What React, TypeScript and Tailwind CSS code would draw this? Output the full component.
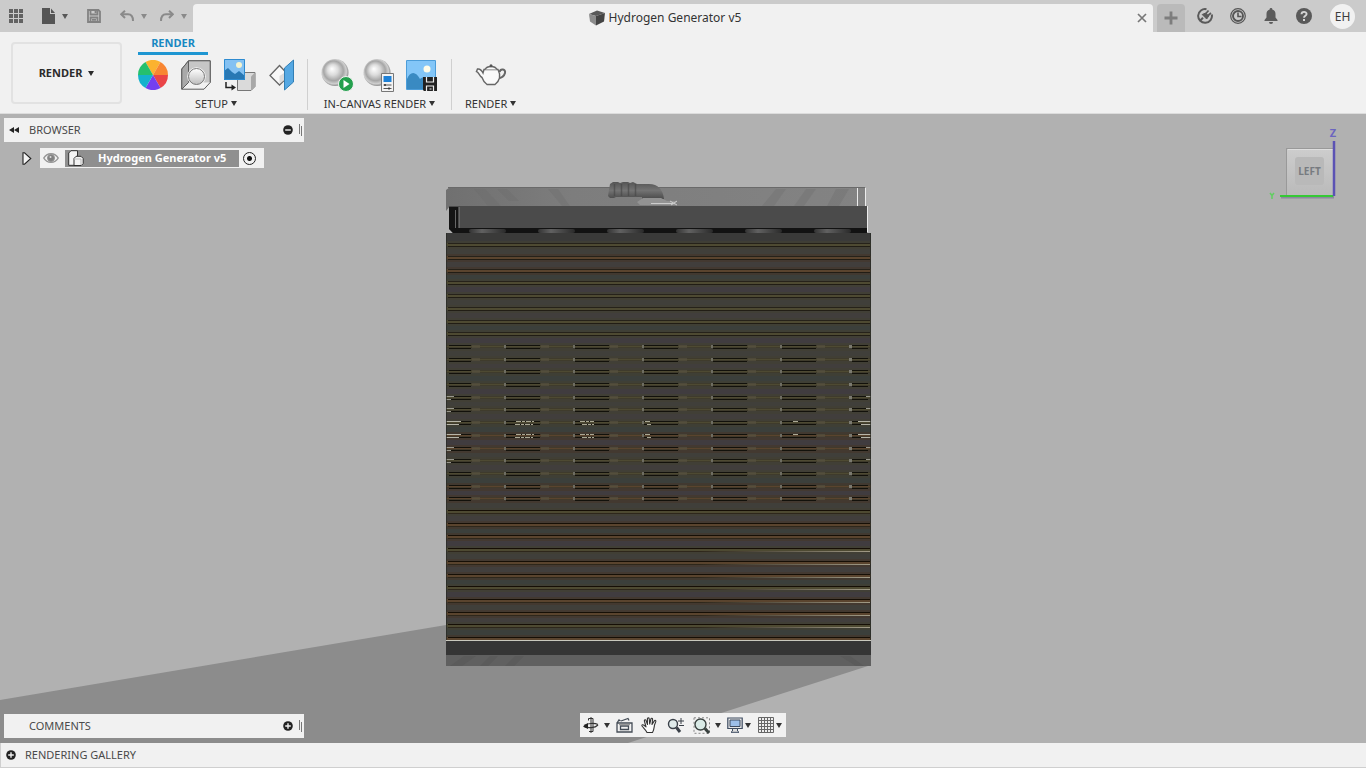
import type { ReactNode } from "react";
import { clsx } from "clsx";

const FONT = "font-['Noto_Sans','Open_Sans',sans-serif]";

function Caret({ className }: { className?: string }) {
  return (
    <svg viewBox="0 0 6 5" className={clsx("w-[6px] h-[5px] shrink-0", className)} aria-hidden="true">
      <path d="M0 0h6L3 5z" fill="currentColor" />
    </svg>
  );
}

function IconButton({
  label,
  className,
  children,
}: {
  label: string;
  className?: string;
  children: ReactNode;
}) {
  return (
    <button type="button" title={label} aria-label={label} className={clsx("flex items-center shrink-0", className)}>
      {children}
    </button>
  );
}

/* Title bar */

function TitleBar() {
  return (
    <header className="flex h-8 bg-[#cbcbcb] text-[#585858]">
      <div className="flex w-[193px] shrink-0 items-center pl-[9px]">
        <IconButton label="Data panel" className="mr-[19px]">
          <svg viewBox="0 0 14 14" className="h-[14px] w-[14px]" fill="#626262">
            {[0, 5, 10].map((y) => [0, 5, 10].map((x) => <rect key={`${x}-${y}`} x={x} y={y} width="4" height="4" />))}
          </svg>
        </IconButton>
        <IconButton label="File" className="mr-[19px] gap-[7px]">
          <svg viewBox="0 0 13 16" className="h-4 w-[13px]" fill="#555">
            <path d="M0 0h8v6h5v10H0z" />
            <path d="M9 0.5 13 5H9z" />
          </svg>
          <Caret />
        </IconButton>
        <IconButton label="Save" className="mr-[19px]">
          <svg viewBox="0 0 14 14" className="h-[14px] w-[14px]" fill="none" stroke="#828282" strokeWidth="1.800">
            <path d="M1 1h10.500L13 2.500V13H1z" />
            <path d="M3.500 1v4.500h7V1M3.500 13V8.500h7V13M5 10.800h4M8.500 1v3" />
          </svg>
        </IconButton>
        <IconButton label="Undo" className="mr-[13px] gap-[7px] text-[#8a8a8a]">
          <svg viewBox="0 0 14 12" className="h-3 w-[14px]" fill="none" stroke="currentColor" strokeWidth="2">
            <path d="M5 .8 1.2 4.3 5 8" />
            <path d="M1.500 4.300H8c3.400 0 5 2.200 5 6.700" />
          </svg>
          <Caret />
        </IconButton>
        <IconButton label="Redo" className="gap-[7px] text-[#8a8a8a]">
          <svg viewBox="0 0 14 12" className="h-3 w-[14px]" fill="none" stroke="currentColor" strokeWidth="2">
            <path d="M9 .8l3.800 3.500L9 8" />
            <path d="M12.500 4.300H6c-3.400 0-5 2.200-5 6.700" />
          </svg>
          <Caret />
        </IconButton>
      </div>

      <div className="mt-1 flex min-w-0 flex-1 items-center rounded-t-[4px] bg-[#f1f1f1] pr-[6px]">
        <div className="flex flex-1 items-center justify-center gap-1 text-[12px] leading-4 text-[#333]">
          <svg viewBox="0 0 16 16" className="h-4 w-4" aria-hidden="true">
            <path d="M0 4 8 .5 16 3 7 6z" fill="#595959" />
            <path d="M0 4l7 2v9.500L1 11.500z" fill="#8c8c8c" />
            <path d="M7 6l9-3-1 8.500-8 4z" fill="#444" />
          </svg>
          <span>Hydrogen Generator v5</span>
        </div>
        <button type="button" aria-label="Close document">
          <svg viewBox="0 0 10 10" className="h-[10px] w-[10px]" stroke="#777" strokeWidth="1.700">
            <path d="M1 1l8 8M9 1 1 9" />
          </svg>
        </button>
      </div>

      <div className="flex shrink-0 items-center pl-1">
        <button type="button" aria-label="New document" className="mt-1 flex h-7 w-7 items-center justify-center rounded-t-[4px] bg-[#bababa]">
          <svg viewBox="0 0 14 14" className="h-[14px] w-[14px]" stroke="#7d7d7d" strokeWidth="2.800">
            <path d="M7 .5v13M.5 7h13" />
          </svg>
        </button>
        <div className="flex items-center gap-[17px] pl-3">
          <IconButton label="Extensions">
            <svg viewBox="0 0 16 16" className="h-4 w-4" fill="none" stroke="#5a5a5a">
              <path d="M9.500 1.200A6.900 6.900 0 1 0 14.800 6.500" strokeWidth="2" />
              <path d="M3 12.800l3-3" strokeWidth="2" />
              <path d="M5.200 6.500l4.500 4.500 2-3-3-3z" fill="#5a5a5a" />
              <path d="M8.500 6l3-3.500M10.500 8l3.500-3" strokeWidth="1.700" />
            </svg>
          </IconButton>
          <IconButton label="Job status">
            <svg viewBox="0 0 16 16" className="h-4 w-4" fill="none" stroke="#555">
              <circle cx="8" cy="8" r="7.300" strokeWidth="1.200" />
              <circle cx="8" cy="8" r="5" strokeWidth="1.900" />
              <path d="M8 4.500V8.500h3.500" strokeWidth="1.600" />
            </svg>
          </IconButton>
          <IconButton label="Notifications">
            <svg viewBox="0 0 16 16" className="h-4 w-4" fill="#5b5b5b">
              <path d="M8 0a1.300 1.300 0 0 1 1.300 1.500C11.700 2 12.500 4 12.500 6v3.500L14.500 12v1h-13v-1l2-2.500V6c0-2 .8-4 3.200-4.500A1.300 1.300 0 0 1 8 0z" />
              <path d="M6 14h4a2 2 0 0 1-4 0z" />
            </svg>
          </IconButton>
          <IconButton label="Help">
            <svg viewBox="0 0 16 16" className="h-4 w-4">
              <circle cx="8" cy="8" r="8" fill="#595959" />
              <path d="M5.500 6.300C5.500 3 10.600 3.200 10.600 6 10.600 7.800 8 7.800 8 9.800" fill="none" stroke="#d4d4d4" strokeWidth="1.900" />
              <rect x="7" y="11" width="2" height="2" fill="#d4d4d4" />
            </svg>
          </IconButton>
        </div>
        <button type="button" aria-label="Account" className="ml-[18px] mr-[11px] h-[25px] w-[25px] rounded-full bg-[#f1f1f1] text-center text-[12px] leading-[25px] text-[#3c3c3c]">
          EH
        </button>
      </div>
    </header>
  );
}

/* Ribbon */

function Ball() {
  return (
    <>
      <defs>
        <radialGradient id="chrome" cx=".48" cy=".48" r=".56" fx=".38" fy=".36">
          <stop offset="0" stopColor="#fff" />
          <stop offset=".35" stopColor="#dcdcdc" />
          <stop offset=".65" stopColor="#a6a6a6" />
          <stop offset=".82" stopColor="#cfcfcf" />
          <stop offset="1" stopColor="#707070" />
        </radialGradient>
      </defs>
      <circle cx="14" cy="13.500" r="13.500" fill="url(#chrome)" />
    </>
  );
}

const WHEEL = [
  ["M15 15 7.500 2A15 15 0 0 1 22.500 2z", "#fbb22f"],
  ["M15 15 22.500 2A15 15 0 0 1 30 15z", "#f88632"],
  ["M15 15H30A15 15 0 0 1 22.500 28z", "#ea4447"],
  ["M15 15 22.500 28A15 15 0 0 1 7.500 28z", "#743ff0"],
  ["M15 15 7.500 28A15 15 0 0 1 0 15z", "#15b2cd"],
  ["M15 15H0A15 15 0 0 1 7.500 2z", "#25c06d"],
];

function GroupLabel({ children }: { children: ReactNode }) {
  return (
    <button type="button" className="flex items-center justify-center gap-[3px] whitespace-nowrap text-[11px] leading-4 text-[#333]">
      {children}
      <Caret className="mb-[2px]" />
    </button>
  );
}

function Ribbon() {
  return (
    <section className="flex h-[82px] border-b border-[#dcdcdc] bg-[#f1f1f1]">
      <button
        type="button"
        className="ml-[11px] mt-[10px] flex h-[62px] w-[111px] shrink-0 items-center justify-center gap-[6px] rounded-[4px] border-2 border-[#e2e2e2] text-[11px] font-bold text-[#2b2b2b]"
      >
        RENDER
        <Caret />
      </button>
      <div className="ml-4 flex flex-col items-start">
        <button type="button" className="h-[23px] w-[70px] border-b-[3px] border-[#1e96d2] text-[11px] font-bold leading-[21px] text-[#1788c2]">
          RENDER
        </button>
        <div className="flex gap-[13px] pt-[4px]">
          <div className="flex flex-col gap-[5px]">
            <div className="flex h-8 items-center gap-[13px]">
              <IconButton label="Appearance">
                <svg viewBox="0 0 30 30" className="h-[30px] w-[30px]">
                  {WHEEL.map(([d, fill]) => (
                    <path key={fill} d={d} fill={fill} />
                  ))}
                </svg>
              </IconButton>
              <IconButton label="Scene settings">
                <svg viewBox="0 0 30 30" className="h-[30px] w-[30px]" stroke="#5c5c5c" strokeLinejoin="round">
                  <path d="M.8 9 7.500.8h21.700v21.700L23 29.200H.8z" fill="#f1f1f1" />
                  <path d="M7.500.8h21.700v21.700H7.500z" fill="#c6c6c6" stroke="none" />
                  <path d="M.8 9 7.500.8v21.700L.8 29.200z" fill="#a9a9a9" />
                  <path d="M7.500.8h21.700v21.700" fill="none" />
                  <circle cx="15.500" cy="16.500" r="9.300" fill="#f5f5f5" stroke="none" />
                  <circle cx="15.500" cy="16.500" r="8" fill="url(#chromeLight)" stroke="#777" />
                  <defs>
                    <linearGradient id="chromeLight" x2="0" y2="1">
                      <stop offset="0" stopColor="#fff" />
                      <stop offset="1" stopColor="#bdbdbd" />
                    </linearGradient>
                  </defs>
                </svg>
              </IconButton>
              <IconButton label="Decal">
                <svg viewBox="0 0 32 32" className="h-8 w-8">
                  <path d="M13.500 17.500l4-4h13.500v14l-4 4H13.500z" fill="#dadada" stroke="#777" />
                  <path d="M27 17.500l4-4v14l-4 4z" fill="#a8a8a8" />
                  <path d="M0 0h21v21H0z" fill="#84c1f2" />
                  <path d="M0 12l4-3 4 4 3 2 4-3 6 5v4H0z" fill="#2878b4" />
                  <path d="M.5.500h20v20H.500z" fill="none" stroke="#2e8bd0" />
                  <circle cx="15" cy="6" r="3" fill="#f5f3cf" />
                  <path d="M2 23v5.500h6" fill="none" stroke="#222" strokeWidth="1.500" />
                  <path d="M7.500 25.500 12 28.500 7.500 31.500z" fill="#222" />
                </svg>
              </IconButton>
              <IconButton label="Texture map controls">
                <svg viewBox="0 0 25 32" className="h-8 w-[25px]">
                  <path d="M1 16.500 10.500 6.500 20 16.500 10.500 26z" fill="#f8f8f8" stroke="#666" strokeWidth="1.300" />
                  <path d="M10.500 25V17l6-4v7z" fill="#dcdcdc" />
                  <path d="M15.500 9 24.500 1v22l-9 8z" fill="#55a8e3" stroke="#327fb5" />
                </svg>
              </IconButton>
            </div>
            <GroupLabel>SETUP</GroupLabel>
          </div>
          <div className="h-[51px] w-px bg-[#d0d0d0]" />
          <div className="flex flex-col gap-[5px]">
            <div className="flex h-8 items-center gap-[9px]">
              <IconButton label="In-canvas render">
                <svg viewBox="0 0 33 33" className="h-[33px] w-[33px]">
                  <Ball />
                  <circle cx="25" cy="25" r="7.500" fill="#24a04e" stroke="#f1f1f1" />
                  <path d="M22.500 21l6 4-6 4z" fill="#fff" />
                </svg>
              </IconButton>
              <IconButton label="In-canvas render settings">
                <svg viewBox="0 0 33 33" className="h-[33px] w-[33px]">
                  <Ball />
                  <path d="M18.500 14.500h12v18h-12z" fill="#f3f3f3" stroke="#777" />
                  <path d="M20.500 17h8v6h-8z" fill="#1d80d6" />
                  <path d="M20.500 26h8M20.500 29.500h8" stroke="#555" />
                  <path d="M22 25v2M26 28.500v2" stroke="#333" strokeWidth="1.500" />
                </svg>
              </IconButton>
              <IconButton label="Capture image">
                <svg viewBox="0 0 33 33" className="h-[33px] w-[33px]">
                  <path d="M2 2h28v29H2z" fill="#83c6f8" />
                  <path d="M2 20c3-8 9-8 13 0 3-3 7-2 15 1v10H2z" fill="#398ac2" />
                  <path d="M1.500 1.500h29v29h-29z" fill="none" stroke="#4c9dd9" />
                  <circle cx="22" cy="10" r="3.500" fill="#fffdea" />
                  <path d="M18 18h14v14H19l-1-1z" fill="#222" />
                  <path d="M21.500 18v5h7v-5M21.500 32v-5h7v5M24.500 30h2" fill="none" stroke="#eee" strokeWidth="1.200" />
                </svg>
              </IconButton>
            </div>
            <GroupLabel>IN-CANVAS RENDER</GroupLabel>
          </div>
          <div className="h-[51px] w-px bg-[#d0d0d0]" />
          <div className="flex flex-col gap-[5px]">
            <div className="flex h-8 items-center justify-center">
              <IconButton label="Render">
                <svg viewBox="0 0 32 22" className="h-[22px] w-8" fill="#fafafa" stroke="#666" strokeWidth="1.400">
                  <path d="M24.500 8c1-4 6.500-3 5.500 1s-4 5-7.500 5.500" fill="none" strokeWidth="2" />
                  <path d="M9 5.500h14c3 6 2 11-3 15h-8c-3-2-4-4-5-7C4 12 4 8 1.500 7.500L2.500 5c3-.5 4 1 5.500 4z" />
                  <path d="M10 5.500c1-2 3-3 6-3s5 1 6 3" />
                  <circle cx="16" cy="1.700" r="1.500" fill="#555" stroke="none" />
                </svg>
              </IconButton>
            </div>
            <GroupLabel>RENDER</GroupLabel>
          </div>
        </div>
      </div>
    </section>
  );
}

/* 3D scene */

const PLATES = Array.from({ length: 32 }, (_, i) => Math.round(243.3 + i * 12.7));
const STUDS = [471, 540, 609, 678, 747, 816];
const FACES = ["#403f3a", "#413e3c", "#3b3f3b", "#403c3f"];

function Plate({ y, index }: { y: number; index: number }) {
  const brown = [1, 2, 15, 16].includes(index) || (index > 18 && index % 3 !== 0);
  const inner = index >= 8 && index <= 20;
  const low = index > 20;
  const core = index === 14 || index === 15;
  return (
    <g>
      <rect x="446" y={y + 3} width="425" height="10" fill={FACES[index % 4]} />
      <rect x="446" y={y - 2} width="425" height="8" fill={brown ? "#45382c" : "#424033"} opacity=".7" />
      <rect x="446" y={y} width="425" height="3" fill={brown ? "#5a442e" : "#4e4a32"} />
      {inner ? (
        <>
          <path d={`M446 ${y}.5H870M446 ${y + 2}.5H870`} stroke="#39362a" opacity=".7" />
          <path
            d={`M449 ${y}.5h22M506 ${y}.5h34M575 ${y}.5h34M644 ${y}.5h34M713 ${y}.5h34M782 ${y}.5h34M852 ${y}.5h16M449 ${y + 3}.5h22M506 ${y + 3}.5h34M575 ${y + 3}.5h34M644 ${y + 3}.5h34M713 ${y + 3}.5h34M782 ${y + 3}.5h34M852 ${y + 3}.5h16`}
            stroke="#12110b"
          />
          {STUDS.map((x) => (
            <g key={x}>
              <rect x={x + 1} y={y} width="8" height="3" fill="#585442" opacity=".6" />
              <rect x={x + 33} y={y} width="2" height="3" fill="#6e6d62" />
            </g>
          ))}
          <rect x="849" y={y} width="3" height="3" fill="#7b7a70" />
        </>
      ) : (
        <>
          <path d={`M448 ${y}.5H870`} stroke={low ? "#160f06" : "#26221a"} />
          <path d={`M448 ${y + 3}.5H870`} stroke={low ? "#2e271b" : "#211d15"} />
        </>
      )}
      {index >= 12 && index <= 17 && <path d={`M446 ${y}.5h8M446 ${y + 3}.5h5M866 ${y}.5h5`} stroke="#98978d" />}
      {core && (
        <>
          <path d={`M446 ${y}.5h15M446 ${y + 3}.5h13M858 ${y}.5h13M861 ${y + 3}.5h10`} stroke="#b6b5a8" />
          <path
            d={`M516 ${y}.5h18M515 ${y + 3}.5h18M580 ${y}.5h14M582 ${y + 3}.5h12M645 ${y}.5h6M647 ${y + 3}.5h4M793 ${y}.5h6`}
            stroke="#aaa894"
            strokeDasharray="5 1 3 1"
          />
        </>
      )}
      {index > 23 && <path d={`M700 ${y + 3}.5H870`} stroke="url(#edge)" />}
    </g>
  );
}

function Scene() {
  return (
    <svg viewBox="0 114 1366 629" preserveAspectRatio="xMidYMid slice" className="absolute inset-0 h-full w-full" role="img" aria-label="Hydrogen Generator model">
      <defs>
        <linearGradient id="edge" gradientUnits="userSpaceOnUse" x1="700" y1="0" x2="870" y2="0">
          <stop offset="0" stopColor="#938d7a" stopOpacity="0" />
          <stop offset="1" stopColor="#a09a86" />
        </linearGradient>
        <linearGradient id="stud">
          <stop offset="0" stopColor="#333" />
          <stop offset=".35" stopColor="#616161" />
          <stop offset="1" stopColor="#2a2a2a" />
        </linearGradient>
        <linearGradient id="cap">
          <stop offset="0" stopColor="#707070" />
          <stop offset=".3" stopColor="#7d7d7d" />
          <stop offset="1" stopColor="#838383" />
        </linearGradient>
        <linearGradient id="hose" x2="0" y2="1">
          <stop offset="0" stopColor="#555" />
          <stop offset=".5" stopColor="#737373" />
          <stop offset="1" stopColor="#4a4a4a" />
        </linearGradient>
      </defs>
      <path d="M0 114H1366V743H0z" fill="#b1b1b1" />
      <path d="M0 700 446 625 868 666 628 743H0z" fill="#8c8c8c" />

      {/* transparent top cover */}
      <path d="M446 211V190l4-3h415v19H450z" fill="url(#cap)" />
      <path d="M448 187.500H865" stroke="#6a6a6a" />
      <path
        d="M474 189l14 17h13l-16-17zM497 189l12 12h10l-12-12zM548 189l14 17h8l-12-17zM776 189l-14 17h12l12-17zM806 189l-12 17h10l12-17zM836 189l-9 17h12l10-17z"
        fill="#6b6b6b"
        opacity=".3"
      />
      <path d="M857.500 188v18M865.500 188v18M867.500 206v26" stroke="#ececec" />

      {/* elbow fitting */}
      <path d="M610 184l3-2h5l2 1 3-1h5l2 1 3-1 4 2h12c9 0 14 6 15 15h-22v-2h-26l-2 1h-4l-2-2z" fill="url(#hose)" />
      <path d="M614.500 184v12M621.500 184v12M628.500 184v12M635.500 184v12" stroke="#444" strokeWidth="1.500" opacity=".6" />
      <path d="M637 202l6-4h18l6 3h10l-2 4h-35z" fill="#939393" />
      <path d="M651 203.500h22M670 201l7 4M677 201l-6 4" stroke="#cdcdcd" />

      {/* lid */}
      <path d="M449 206h418v27H455l-6-4z" fill="#4b4b4b" />
      <path d="M449 207h9v26h-5l-4-4z" fill="#151515" />
      <path d="M455.500 210v18M459.500 207v21" stroke="#676767" />
      <path d="M449 228h418v5H453z" fill="#121212" />
      {STUDS.map((x) => (
        <rect key={x} x={x - 2} y="229" width="37" height="4" rx="2" fill="url(#stud)" />
      ))}

      {/* plate stack */}
      <rect x="446" y="233" width="425" height="408" fill="#3a3a39" />
      {PLATES.map((y, i) => (
        <Plate key={y} y={y} index={i} />
      ))}
      <path d="M446.500 233V641M870.500 233V641" stroke="#272924" opacity=".7" />
      <rect x="446" y="640" width="425" height="15" fill="#353535" />
      <path d="M446 640.500H871" stroke="#c9c8bd" />
      <rect x="446" y="655" width="425" height="11" fill="#606060" />
      <path d="M450 666l14-10h12l-14 10zM480 666l10-10h8l-10 10zM505 666l10-10h9l-10 10zM840 656l16 10h8l-14-10z" fill="#555" opacity=".5" />
    </svg>
  );
}

function ViewCube() {
  return (
    <svg viewBox="0 -4 80 82" className="h-[82px] w-20 font-['Noto_Sans',sans-serif]" role="img" aria-label="View cube: left">
      <defs>
        <linearGradient id="cube" x2="0" y2="1">
          <stop offset="0" stopColor="#cdcdcd" />
          <stop offset="1" stopColor="#bababa" />
        </linearGradient>
      </defs>
      <rect x="20.500" y="22.500" width="48" height="47" fill="url(#cube)" stroke="#999" />
      <path d="M22 23.500h45" stroke="#dedede" />
      <rect x="29" y="31" width="29" height="28" rx="3" fill="#b9b9b9" />
      <text x="43.500" y="49" textAnchor="middle" fontSize="10" fontWeight="bold" fill="#777b80">
        LEFT
      </text>
      <path d="M15 71h53" stroke="#8a8a9c" strokeWidth="3" />
      <path d="M14 70h53" stroke="#35c935" strokeWidth="2" />
      <path d="M68 15v55" stroke="#5b52b4" strokeWidth="2.500" />
      <text x="67" y="11" textAnchor="middle" fontSize="11" fontWeight="bold" fill="#6b64c0">
        Z
      </text>
      <path d="M4 67l2 2.500L8 67M6 69v4" stroke="#60cf60" strokeWidth="1.500" fill="none" />
    </svg>
  );
}

function RoundToggle({ label, plus }: { label: string; plus?: boolean }) {
  return (
    <IconButton label={label}>
      <svg viewBox="0 0 10 10" className="h-[10px] w-[10px]">
        <circle cx="5" cy="5" r="4.800" fill="#222" />
        <path d={plus ? "M2.200 5h5.600M5 2.200v5.600" : "M2.200 5h5.600"} stroke="#f1f1f1" strokeWidth="1.400" />
      </svg>
    </IconButton>
  );
}

function Grip() {
  return (
    <svg viewBox="0 0 3 12" className="ml-[6px] h-3 w-[3px]" aria-hidden="true">
      <path d="M.5 0v10M2.500 2v10" stroke="#777" />
    </svg>
  );
}

function BrowserPanel() {
  return (
    <aside className="ml-1 mt-1 w-[300px]">
      <div className="flex h-6 items-center bg-[#f1f1f1] pl-[5px] pr-[2px]">
        <IconButton label="Collapse browser">
          <svg viewBox="0 0 10 6" className="h-[6px] w-[10px]" fill="#222">
            <path d="M5 0v6L0 3zM10 0v6L5 3z" />
          </svg>
        </IconButton>
        <h2 className="ml-[10px] flex-1 text-[11px] leading-4 text-[#4a4a4a]">BROWSER</h2>
        <RoundToggle label="Collapse all" />
        <Grip />
      </div>
      <div className="mt-[6px] flex h-5 items-center pl-[18px]">
        <IconButton label="Expand Hydrogen Generator v5" className="mr-[8px]">
          <svg viewBox="0 0 10 13" className="h-[13px] w-[10px]">
            <path d="M1 .8V12.200L2.500 12.200 8.800 6.500 2.500.8z" fill="#f3f3f3" stroke="#222" strokeWidth="1.100" />
          </svg>
        </IconButton>
        <div className="flex h-5 items-center bg-[#f1f1f1]">
          <IconButton label="Toggle visibility" className="ml-[3px] mr-[5px]">
            <svg viewBox="0 0 16 12" className="h-3 w-4" fill="none" stroke="#959595">
              <path d="M.8 6C4 .2 12 .2 15.200 6 12 11.800 4 11.800.8 6z" strokeWidth="1.500" />
              <circle cx="8" cy="6" r="3.500" fill="#808080" />
              <circle cx="7.500" cy="5" r="1" fill="#ddd" stroke="none" />
            </svg>
          </IconButton>
          <div className="ml-px flex h-[17px] w-[174px] items-center bg-[#8f8f8f] pl-[3px] text-[11px] font-bold leading-4 text-white">
            <svg viewBox="0 0 16 16" className="mr-[14px] h-4 w-4 shrink-0" fill="#f4f4f4" stroke="#333" aria-hidden="true">
              <path d="M.7 3 3 .7h6.500V13l-2 2.300H.7z" />
              <path d="M6 8.500l2-2.200h5l2.200 2.200v5l-2 2H6z" />
              <path d="M6 9h7v6" fill="none" stroke="#bbb" />
            </svg>
            <span className="whitespace-nowrap">Hydrogen Generator v5</span>
          </div>
          <label className="ml-[2px] mr-[6px] flex h-[14px] w-[17px] items-center justify-center">
            <input
              type="radio"
              name="active-component"
              aria-label="Activate component"
              defaultChecked
              className="h-[13px] w-[13px] appearance-none rounded-full border border-[#222] bg-[radial-gradient(circle,#111_2px,transparent_3px)]"
            />
          </label>
        </div>
      </div>
    </aside>
  );
}

function NavToolbar() {
  return (
    <nav className="mb-px flex h-6 w-[206px] items-center bg-[#f1f1f1] pl-[3px] text-[#333]">
      <IconButton label="Orbit" className="mr-[6px] gap-[5px]">
        <svg viewBox="0 0 16 16" className="h-4 w-4" fill="none" stroke="#333" strokeWidth="1.200">
          <path d="M8 0v16M5.500 3.500V1.500h4.500v13H6" strokeWidth="1" />
          <path d="M15 7.500C12 6 4 6 1 8.500M1 9.500c4 2 11 1.500 14-1.500" />
          <path d="M5 6v6L0 9.500z" fill="#222" stroke="none" />
        </svg>
        <Caret />
      </IconButton>
      <IconButton label="Look at" className="mr-[8px]">
        <svg viewBox="0 0 17 16" className="h-4 w-[17px]" fill="none" stroke="#444c56" strokeWidth="1.300">
          <path d="M1 6h15v9H1zM1 6l2-3 1.500 1M5 4l7-2.500 1 2M12 1.500" />
          <path d="M4.500 9h8v3.500h-8z" />
          <path d="M3 7.500h11" stroke="#999" />
        </svg>
      </IconButton>
      <IconButton label="Pan" className="mr-[9px]">
        <svg viewBox="0 0 17 17" className="h-[17px] w-[17px]" fill="#fbfbfb" stroke="#333" strokeWidth="1.100" strokeLinejoin="round">
          <path d="M6 15.500C5 13 2.500 11 1 9c-.5-1.200 1-1.700 2-.7l2 1.500L3.400 4c-.3-1.400 1.300-1.700 1.700-.4L6.500 7.500 6.400 1.800c0-1.300 1.700-1.300 1.800 0L8.700 7l1.200-5c.3-1.200 1.800-.9 1.700.3L11 7.500l2.300-3.600c.7-1 1.900-.3 1.500.7L13.500 8c-.5 3.500-.5 5-2 7.500z" />
        </svg>
      </IconButton>
      <IconButton label="Zoom" className="mr-[8px]">
        <svg viewBox="0 0 18 17" className="h-[17px] w-[18px]" fill="none" stroke="#3a4048" strokeWidth="1.400">
          <circle cx="6" cy="7" r="4.500" fill="#dfeaea" />
          <path d="M9.500 10.500 13 15" strokeWidth="3" />
          <path d="M14 1v6M11 4h6M12 8.500h5" strokeWidth="1" />
        </svg>
      </IconButton>
      <IconButton label="Fit" className="mr-[6px] gap-[4px]">
        <svg viewBox="0 0 18 17" className="h-[17px] w-[18px]" fill="none" stroke="#39413f" strokeWidth="1.400">
          <path d="M1 .8h15.500v15.500H1z" stroke="#888" strokeWidth="1" strokeDasharray="2 2" />
          <circle cx="7.500" cy="7.500" r="5.500" fill="#d9eae6" />
          <path d="M12 11.500 16 16" strokeWidth="3" />
        </svg>
        <Caret />
      </IconButton>
      <IconButton label="Display settings" className="mr-[7px] gap-[2px]">
        <svg viewBox="0 0 16 16" className="h-4 w-4" stroke="#3e4c61" fill="none">
          <path d="M.8 1h14.400v10.500H.8z" fill="#e6e6e6" strokeWidth="1.200" />
          <path d="M3 3h10v6.500H3z" fill="#9dbfe9" />
          <path d="M5.500 11.500h5V14l1.500 1.300H4L5.500 14z" fill="#ddd" />
        </svg>
        <Caret />
      </IconButton>
      <IconButton label="Grid and snaps" className="gap-[2px]">
        <svg viewBox="0 0 16 16" className="h-4 w-4" fill="#eee" stroke="#666">
          <path d="M.5.500h15v15H.500z" />
          <path d="M3.500 0v16M6.500 0v16M9.500 0v16M12.500 0v16M0 3.500h16M0 6.500h16M0 9.500h16M0 12.500h16" />
        </svg>
        <Caret />
      </IconButton>
    </nav>
  );
}

export default function App() {
  return (
    <div className={clsx("flex h-screen flex-col overflow-hidden bg-[#b1b1b1]", FONT)}>
      <TitleBar />
      <Ribbon />
      <main className="relative min-h-0 flex-1">
        <Scene />
        <div className="relative flex h-full flex-col justify-between">
          <div className="flex items-start justify-between">
            <BrowserPanel />
            <div className="mr-5 mt-2">
              <ViewCube />
            </div>
          </div>
          <div className="grid grid-cols-[1fr_auto_1fr] items-end pb-[5px]">
            <div className="ml-1 flex h-6 w-[300px] items-center bg-[#f1f1f1] pl-[25px] pr-[2px]">
              <h2 className="flex-1 text-[11px] leading-4 text-[#4a4a4a]">COMMENTS</h2>
              <RoundToggle label="Expand comments" plus />
              <Grip />
            </div>
            <NavToolbar />
          </div>
        </div>
      </main>
      <footer className="flex h-[25px] shrink-0 items-center gap-[9px] border-b border-l border-[#cfcfcf] bg-[#f1f1f1] pl-[5px]">
        <RoundToggle label="Expand gallery" plus />
        <h2 className="text-[11px] leading-4 text-[#4a4a4a]">RENDERING GALLERY</h2>
      </footer>
    </div>
  );
}
